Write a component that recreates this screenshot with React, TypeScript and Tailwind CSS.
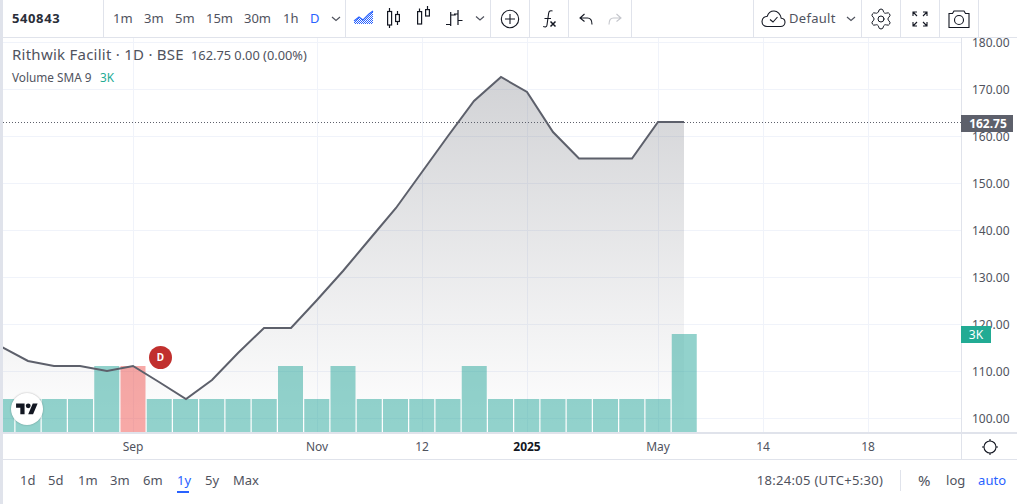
import React from 'react';
import { Settings } from 'lucide-react';

const points = [
  [2, 347], [28, 361], [54, 366], [80, 366], [107, 371], [133, 366], [159, 382], [186, 399],
  [212, 380], [238, 353], [264, 328], [291, 328], [317, 300], [343, 271], [369, 240], [396, 208],
  [422, 172], [448, 136], [474, 101], [501, 77], [527, 92], [553, 132], [579, 158.5], [606, 158.5],
  [632, 158.5], [658, 122], [684, 122],
];

// volume bars: x, width, top, red
const tall = new Set([-1, 0, 6, 8, 13]);
const bars = Array.from({ length: 27 }, (_, i) => {
  const k = i - 5;
  const center = 133 + k * 26.25;
  const left = Math.max(3, center - 12.5);
  const top = k === 21 ? 334 : tall.has(k) ? 366 : 399;
  return { left, width: center + 12.5 - left, top, red: k === 0 };
});

const gridX = [133, 317, 422, 527, 658, 763, 868];
const gridY = [42, 89, 136, 183, 230, 277, 324, 371, 418];
const prices = ['180.00', '170.00', '160.00', '150.00', '140.00', '130.00', '120.00', '110.00', '100.00'];

const timeLabels = [
  { label: 'Sep', width: 'w-[260px]', bold: false },
  { label: 'Nov', width: 'w-[108px]', bold: false },
  { label: '12', width: 'w-[102px]', bold: false },
  { label: '2025', width: 'w-[108px]', bold: true },
  { label: 'May', width: 'w-[154px]', bold: false },
  { label: '14', width: 'w-[56px]', bold: false },
  { label: '18', width: 'w-[154px]', bold: false },
];

function Chevron() {
  return (
    <svg width="10" height="6" viewBox="0 0 10 6" fill="none" stroke="#50535e" strokeWidth="1.2">
      <path d="M1 1l4 3.5L9 1" />
    </svg>
  );
}

function Toolbar() {
  return (
    <div className="h-[38px] flex border-b border-[#e0e3eb] text-[#50535e] shrink-0 overflow-hidden">
      <div className="w-[101px] border-r border-[#e0e3eb] pl-[9px] flex items-center text-[13px] font-bold text-[#2a2e39] tracking-[0.6px]">
        540843
      </div>
      <div className="w-[242px] border-r border-[#e0e3eb] flex items-center text-[13px] relative">
        <span className="ml-[9px] w-[31px]">1m</span>
        <span className="w-[31px]">3m</span>
        <span className="w-[31px]">5m</span>
        <span className="w-[38px]">15m</span>
        <span className="w-[39px]">30m</span>
        <span className="w-[27px]">1h</span>
        <span className="w-[21px] text-[#2962ff]">D</span>
        <Chevron />
      </div>
      <div className="w-[145px] border-r border-[#e0e3eb] shrink-0">
        <svg width="144" height="37" viewBox="346 0 144 37" fill="none">
          <defs>
            <pattern id="dither" width="2" height="2" patternUnits="userSpaceOnUse">
              <rect width="1" height="1" fill="#2962ff" />
              <rect x="1" y="1" width="1" height="1" fill="#2962ff" />
            </pattern>
          </defs>
          <path d="M354 24v-3l5-4 4 3 6-6 4-3v13z" fill="url(#dither)" />
          <path d="M354 21l5-4 4 3 6-6 4-3" stroke="#2962ff" strokeWidth="1.2" />
          <g stroke="#131722" strokeWidth="1.2">
            <rect x="387.6" y="11.5" width="4" height="13.5" />
            <path d="M389.5 8v3.5M389.5 25v3" />
            <rect x="395.6" y="14.5" width="3.8" height="7" />
            <path d="M397.5 11v3.5M397.5 21.5V25" />
            <rect x="417.6" y="11.6" width="4" height="12.4" />
            <path d="M419.5 8.5v3" />
            <rect x="425.6" y="9.6" width="3.8" height="6.4" />
            <path d="M427.5 6v3.5" />
            <path d="M450.7 12v14M446 24.5h4.7M450.7 15h5M458 10v15M458 14h-4M458 20.5h4.5" />
          </g>
          <g transform="translate(475 15.5)">
            <Chevron />
          </g>
        </svg>
      </div>
      <div className="w-[39px] border-r border-[#e0e3eb] flex items-center justify-center shrink-0">
        <svg width="20" height="20" viewBox="0 0 20 20" fill="none" stroke="#131722" strokeWidth="1.1">
          <circle cx="10" cy="10" r="8.7" />
          <path d="M10 5v10M5 10h10" />
        </svg>
      </div>
      <div className="w-[39px] border-r border-[#e0e3eb] flex items-center justify-center shrink-0">
        <svg width="18" height="20" viewBox="0 0 18 20" fill="none" stroke="#131722" strokeWidth="1.1">
          <path d="M12.5 2c-2-.7-3.6 0-3.9 2.5L7 16c-.3 2-1.6 2.4-3.8 1.6M4.5 9.5H11" />
          <path d="M10.5 12.5l5 5M15.5 12.5l-5 5" strokeWidth="1.5" />
        </svg>
      </div>
      <div className="w-[63px] border-r border-[#e0e3eb] shrink-0 flex items-center pl-[10px] gap-[15px]">
        <svg width="14" height="12" viewBox="0 0 14 12" fill="none" stroke="#131722" strokeWidth="1.1">
          <path d="M5.5 1L1 5l4.5 3.5M1 5h7.5c3 0 4.5 2 4.5 6.5" />
        </svg>
        <svg width="14" height="12" viewBox="0 0 14 12" fill="none" stroke="#c4c6cc" strokeWidth="1.1">
          <path d="M8.5 1L13 5 8.5 8.5M13 5H5.5C2.5 5 1 7 1 11.5" />
        </svg>
      </div>
      <div className="flex-1" />
      <div className="w-[109px] border-l border-r border-[#e0e3eb] flex items-center pl-[7px] text-[13px] shrink-0">
        <svg width="25" height="18" viewBox="0 0 25 18" fill="none" stroke="#131722" strokeWidth="1.1">
          <path d="M6 16.5h13.5c2.5 0 4.5-1.8 4.5-4.2 0-2.2-1.6-3.9-3.8-4.1C19.6 4 16.5 1 13 1 9.8 1 7.2 3 6.3 6.2 3 6.6 1 9 1 11.6c0 2.8 2.2 4.9 5 4.9z" />
          <path d="M9 9.5l3 2.5 4.5-5" />
        </svg>
        <span className="ml-[3px] w-[57px] tracking-[0.3px]">Default</span>
        <Chevron />
      </div>
      <div className="w-[39px] border-r border-[#e0e3eb] flex items-center justify-center shrink-0">
        <Settings size={24} strokeWidth={1} color="#131722" />
      </div>
      <div className="w-[39px] border-r border-[#e0e3eb] flex items-center justify-center shrink-0">
        <svg width="18" height="18" viewBox="0 0 18 18" fill="none" stroke="#131722" strokeWidth="1.1">
          <path d="M2 6V2h4M2 2l4 4M12 2h4v4M16 2l-4 4M2 12v4h4M2 16l4-4M16 12v4h-4M16 16l-4-4" />
        </svg>
      </div>
      <div className="w-[39px] border-r border-[#e0e3eb] flex items-center justify-center shrink-0">
        <svg width="22" height="18" viewBox="0 0 22 18" fill="none" stroke="#131722" strokeWidth="1.1">
          <path d="M1 3.5h3.5L6 1h10l1.5 2.5H21v14H1z" />
          <circle cx="11" cy="10" r="4.5" />
        </svg>
      </div>
      <div className="w-[38px]" />
    </div>
  );
}

function ChartPane() {
  const line = points.map((p) => p.join(',')).join(' ');
  const area = `3,432 ${line} 684,432`;
  return (
    <div className="relative w-[959px] shrink-0 overflow-hidden border-r border-[#e0e3eb]">
      <svg className="absolute inset-0" width="958" height="394" viewBox="3 38 958 394">
        <defs>
          <linearGradient id="areaFill" gradientUnits="userSpaceOnUse" x1="0" y1="77" x2="0" y2="432">
            <stop offset="0" stopColor="#5d606b" stopOpacity="0.28" />
            <stop offset="1" stopColor="#5d606b" stopOpacity="0" />
          </linearGradient>
        </defs>
        {gridY.map((y) => (
          <line key={y} x1="3" x2="961" y1={y + 0.5} y2={y + 0.5} stroke="#f0f3fa" />
        ))}
        {gridX.map((x) => (
          <line key={x} x1={x + 0.5} x2={x + 0.5} y1="38" y2="432" stroke="#f0f3fa" />
        ))}
        <polygon points={area} fill="url(#areaFill)" />
        {bars.map((b, i) => (
          <rect
            key={i}
            x={b.left}
            y={b.top}
            width={b.width}
            height={432 - b.top}
            fill={b.red ? '#ef5350' : '#26a69a'}
            fillOpacity={0.5}
          />
        ))}
        <polyline points={line} fill="none" stroke="#5d606b" strokeWidth="2" />
        <line x1="3" x2="961" y1="122.5" y2="122.5" stroke="#5d606b" strokeDasharray="1 2" />
      </svg>

      <div className="absolute left-[9px] top-[5px] text-[#50535e]">
        <div className="flex items-baseline h-[20px]">
          <span className="text-[15px] tracking-[0.25px] w-[179px] whitespace-nowrap">Rithwik Facilit · 1D · BSE</span>
          <span className="text-[12.8px] whitespace-nowrap">162.75 0.00 (0.00%)</span>
        </div>
        <div className="flex items-baseline text-[11.8px] mt-[6px]">
          <span className="w-[88px] whitespace-nowrap">Volume SMA 9</span>
          <span className="text-[#22ab94]">3K</span>
        </div>
      </div>

      <div className="absolute left-[146px] top-[308px] w-[23px] h-[23px] rounded-full bg-[#c1302e] text-white text-[10px] font-bold flex items-center justify-center">
        D
      </div>

      <div className="absolute left-[8px] top-[355px] w-[32px] h-[32px] rounded-full bg-white shadow-[0_0_2px_rgba(0,0,0,0.3)] flex items-center justify-center">
        <svg width="22" height="17" viewBox="0 0 36 28" fill="#131722">
          <path d="M14 22H7V11H0V4h14v18zM28 22h-8l7.5-18h8L28 22z" />
          <circle cx="20" cy="8" r="4" />
        </svg>
      </div>
    </div>
  );
}

function PriceAxis() {
  return (
    <div className="relative w-[55px] shrink-0 overflow-visible">
      <div className="h-full overflow-hidden flex flex-col text-[12px] text-[#50535e] pl-[10px]">
        <div className="-mt-[3.5px]">
          {prices.map((p) => (
            <div key={p} className="h-[47px] leading-[15px]">
              {p}
            </div>
          ))}
        </div>
      </div>
      <div className="absolute -left-[1px] top-[77px] w-[52px] h-[17px] bg-[#5d606b] text-white text-[12px] font-bold flex items-center justify-center pl-[2px]">
        162.75
      </div>
      <div className="absolute -left-[1px] top-[288px] w-[30px] h-[17px] bg-[#22ab94] text-white text-[12px] flex items-center justify-center">
        3K
      </div>
    </div>
  );
}

function TimeAxis() {
  return (
    <div className="h-[28px] flex border-t-2 border-b border-[#e0e3eb] shrink-0">
      <div className="w-[959px] flex items-center border-r border-[#e0e3eb] text-[12px] text-[#50535e] shrink-0">
        {timeLabels.map((t) => (
          <div key={t.label} className={`${t.width} text-center shrink-0 ${t.bold ? 'font-bold text-[#131722]' : ''}`}>
            {t.label}
          </div>
        ))}
      </div>
      <div className="flex-1 flex items-center justify-center">
        <svg width="18" height="18" viewBox="0 0 18 18" fill="none" stroke="#131722" strokeWidth="1.1">
          <circle cx="9" cy="9" r="6" />
          <path d="M9 1v2M9 15v2M1 9h2M15 9h2" />
        </svg>
      </div>
    </div>
  );
}

function BottomBar() {
  const ranges = [
    ['1d', 'w-[28px]'],
    ['5d', 'w-[30px]'],
    ['1m', 'w-[32px]'],
    ['3m', 'w-[33px]'],
    ['6m', 'w-[34px]'],
    ['1y', 'w-[28px]'],
    ['5y', 'w-[28px]'],
    ['Max', 'w-[30px]'],
  ];
  return (
    <div className="flex-1 flex items-start text-[13px] text-[#50535e]">
      <div className="flex items-center h-[38px] pl-[17px]">
        {ranges.map(([label, width]) => (
          <div key={label} className={`relative ${width} shrink-0 h-full flex items-center pt-[3px] ${label === '1y' ? 'text-[#2962ff]' : ''}`}>
            {label}
            {label === '1y' && <div className="absolute left-0 top-[31px] w-[12px] h-[2px] bg-[#2962ff]" />}
          </div>
        ))}
      </div>
      <div className="ml-auto flex items-center h-[38px] pt-[3px] pr-[11px]">
        <span className="whitespace-nowrap tracking-[0.3px] mr-[17px]">18:24:05 (UTC+5:30)</span>
        <div className="w-px h-[21px] bg-[#e0e3eb] mr-[17px]" />
        <span className="text-[15px] w-[28px]">%</span>
        <span className="w-[32px]">log</span>
        <span className="text-[#2962ff]">auto</span>
      </div>
    </div>
  );
}

export default function App() {
  return (
    <div className="w-[1034px] h-[504px] flex bg-white overflow-hidden font-['Noto_Sans','Open_Sans',sans-serif]">
      <div className="w-[3px] bg-[#e0e3eb] shrink-0" />
      <div className="w-[1014px] flex flex-col shrink-0">
        <Toolbar />
        <div className="h-[394px] flex shrink-0">
          <ChartPane />
          <PriceAxis />
        </div>
        <TimeAxis />
        <BottomBar />
      </div>
    </div>
  );
}
